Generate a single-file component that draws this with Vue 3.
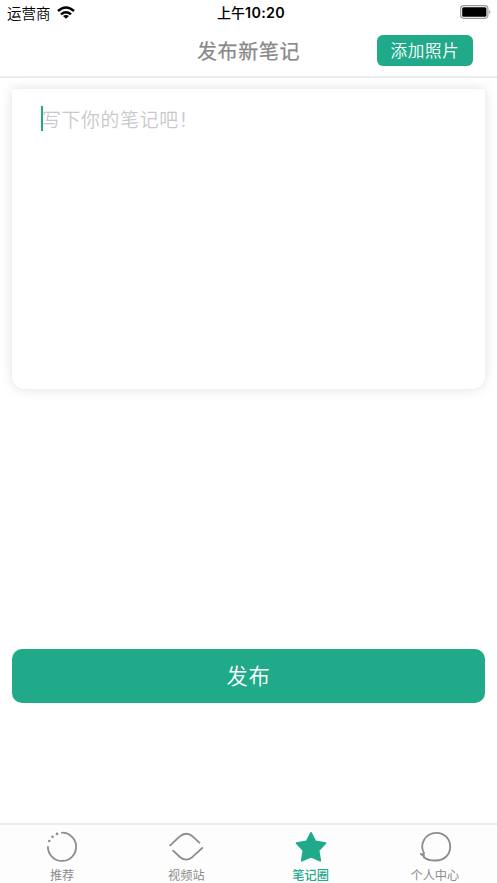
<script setup>
import { ref } from 'vue'

const active = ref('notes')
const tabs = [
  { id: 'recommend', label: '推荐' },
  { id: 'video', label: '视频站' },
  { id: 'notes', label: '笔记圈' },
  { id: 'profile', label: '个人中心' },
]
</script>

<template>
  <div class="screen">
    <div class="status">
      <div class="carrier">
        <span>运营商</span>
        <svg class="wifi" width="18" height="13" viewBox="0 0 18 13">
          <g fill="none" stroke="#000" stroke-width="2.5">
            <path d="M1 5 Q9 -1.9 17 5" />
            <path d="M4 8.4 Q9 4.2 14 8.4" />
          </g>
          <path d="M6 10 Q9 7.8 12 10 L9 12.7Z" />
        </svg>
      </div>
      <span class="time">上午<b>10:20</b></span>
      <svg class="battery" width="32" height="14" viewBox="0 0 32 14">
        <rect x="0.7" y="0.7" width="27.2" height="12.6" rx="3.2" fill="#fff" stroke="#999" stroke-width="1.2" />
        <rect x="2.2" y="2.2" width="24.2" height="9.6" rx="1.5" />
        <path d="M29.2 4.8 Q31.6 7 29.2 9.2Z" fill="#999" />
      </svg>
    </div>
    <header class="header">
      <h1>发布新笔记</h1>
      <button class="add"><span>添加照片</span></button>
    </header>
    <main class="content">
      <div class="editor"><i class="caret"></i><span>写下你的笔记吧！</span></div>
      <button class="publish"><span>发布</span></button>
    </main>
    <nav class="tabs">
      <a v-for="t in tabs" :key="t.id" class="tab" :class="{ active: t.id === active }" @click="active = t.id">
        <svg width="36" height="32" viewBox="0 0 36 32" fill="none" stroke="currentColor" stroke-width="1.8" stroke-linecap="round" stroke-linejoin="round">
          <template v-if="t.id === 'recommend'">
            <path d="M18 1.7 A14.1 14.1 0 1 1 3.9 15.8" />
            <g fill="currentColor" stroke="none">
              <circle cx="13" cy="2.9" r="1.3" />
              <circle cx="8.5" cy="5.7" r="1.3" />
              <circle cx="5.3" cy="10" r="1.3" />
            </g>
          </template>
          <template v-else-if="t.id === 'video'">
            <path d="M2.2 14.4 L11.5 5.6 Q18 0 24.5 5.3 L31.4 11.6" />
            <path d="M5.2 19.7 L11.8 26 Q18 31.2 24.2 26.2 L34.3 17" />
          </template>
          <path v-else-if="t.id === 'notes'" fill="currentColor" d="M18 1.9 L22.4 10.3 L32.4 12.1 L25.6 19.3 L27.2 29.7 L18 25.6 L8.8 29.7 L10.4 19.3 L3.6 12.1 L13.6 10.3Z" />
          <path v-else transform="translate(0.8 0)" d="M6.4 22.6 C1.3 14.1 6.8 1.8 18.7 1.8 C26.8 1.8 32.4 8.2 32.4 15.8 C32.4 24 26.3 29.5 17.8 29.5 C13 29.5 8.5 28.4 6 26.2 L6.3 24.9 Q4.4 24.6 3 23 Q4.9 23.5 6.4 22.6Z" />
        </svg>
        <span>{{ t.label }}</span>
      </a>
    </nav>
  </div>
</template>

<style>
body {
  margin: 0;
  background: #fff;
}
</style>

<style scoped>
.screen {
  width: 497px;
  height: 883px;
  display: flex;
  flex-direction: column;
  overflow: hidden;
  font-family: 'Noto Sans CJK SC', sans-serif;
  background: #fff;
}
.status {
  height: 25px;
  flex: none;
  box-sizing: border-box;
  padding: 0 5px 0 7px;
  display: grid;
  grid-template-columns: 1fr auto 1fr;
  align-items: center;
  font-size: 14.5px;
  line-height: 24px;
  color: #000;
}
.carrier {
  display: flex;
  align-items: center;
  gap: 6px;
}
.carrier span {
  font-weight: 350;
}
.wifi {
  margin-top: -1px;
}
.time {
  padding-left: 3px;
  font-size: 14px;
  font-weight: 500;
}
.time b {
  font-family: Inter, sans-serif;
  font-size: 14.3px;
  font-weight: 600;
  letter-spacing: 0.3px;
}
.battery {
  justify-self: end;
  margin-top: -1px;
}
.header {
  height: 53px;
  flex: none;
  box-sizing: border-box;
  border-bottom: 2px solid #ececec;
  display: grid;
  grid-template-columns: 1fr auto 1fr;
  align-items: center;
}
h1 {
  grid-column: 2;
  margin: 0;
  font-size: 20px;
  letter-spacing: 0.6px;
  font-weight: 400;
  -webkit-text-stroke: 0.25px #888;
  line-height: 30px;
  color: #888;
}
button {
  border: 0;
  padding: 0;
  font-family: inherit;
  color: #fff;
  background: #21aa89;
}
button span {
  display: block;
}
.add {
  justify-self: end;
  width: 96px;
  height: 31px;
  margin-right: 24px;
  border-radius: 6px;
  font-size: 16.6px;
  letter-spacing: 0.6px;
  font-weight: 350;
}
.add span {
  line-height: 31px;
}
.content {
  flex: 1;
  padding: 11px 12px 0;
  display: flex;
  flex-direction: column;
}
.editor {
  height: 300px;
  box-sizing: border-box;
  padding: 17px 29px;
  display: flex;
  align-items: flex-start;
  border-radius: 2px 2px 13px 13px;
  background: #fff;
  box-shadow: 0 0 12px rgba(0, 0, 0, 0.13);
  font-size: 18.8px;
  letter-spacing: 0.75px;
  font-weight: 350;
  line-height: 25px;
  color: #c8c8cc;
}
.caret {
  width: 2.4px;
  height: 25px;
  background: #21aa89;
}
.editor span {
  margin-left: -1.4px;
}
.publish {
  height: 54px;
  margin-top: 260px;
  border-radius: 10px;
  font-size: 21.2px;
  letter-spacing: 0.8px;
  font-weight: 350;
}
.publish span {
  line-height: 52px;
  padding-bottom: 2px;
}
.tabs {
  height: 60px;
  flex: none;
  box-sizing: border-box;
  border-top: 2px solid #ececec;
  background: #fdfdfd;
  display: grid;
  grid-template-columns: repeat(4, 1fr);
}
.tab {
  display: flex;
  flex-direction: column;
  align-items: center;
  padding-top: 6px;
  font-size: 12.2px;
  line-height: 18px;
  color: #8c8c8c;
}
.tab svg {
  flex: none;
}
.tab span {
  margin-top: 3px;
}
.tab.active {
  color: #21aa89;
}
.tab.active span {
  font-weight: 500;
}
</style>
